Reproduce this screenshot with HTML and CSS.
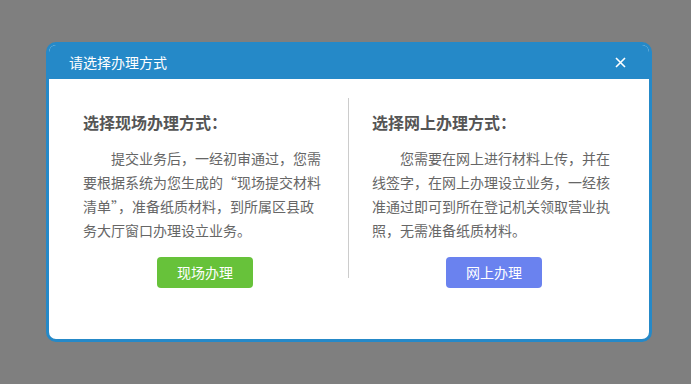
FILE: index.html
```html
<!DOCTYPE html>
<html lang="zh-CN">
<head>
    <meta charset="UTF-8">
    <title>请选择办理方式</title>
    <link rel="stylesheet" href="styles.css">
</head>
<body>
    <div class="dialog">
        <div class="dialog-header">
            <span class="dialog-title">请选择办理方式</span>
            <span class="dialog-close">
                <svg width="11" height="11" viewBox="0 0 11 11"><path d="M1 1L10 10M10 1L1 10" stroke="#fff" stroke-width="1.6" fill="none"/></svg>
            </span>
        </div>
        <div class="dialog-body">
            <div class="way way-left">
                <h2 class="way-title">选择现场办理方式：</h2>
                <p class="way-text">提交业务后，一经初审通过，您需要根据系统为您生成的“现场提交材料清单”，准备纸质材料，到所属区县政务大厅窗口办理设立业务。</p>
                <div class="way-action">
                    <a href="#" class="btn btn-green">现场办理</a>
                </div>
            </div>
            <div class="divider"></div>
            <div class="way way-right">
                <h2 class="way-title">选择网上办理方式：</h2>
                <p class="way-text">您需要在网上进行材料上传，并在线签字，在网上办理设立业务，一经核准通过即可到所在登记机关领取营业执照，无需准备纸质材料。</p>
                <div class="way-action">
                    <a href="#" class="btn btn-blue">网上办理</a>
                </div>
            </div>
        </div>
    </div>
</body>
</html>
```

FILE: styles.css
```css
:root {
    --main-blue: #2589c8;
    --page-bg: #7f7f7f;
    --title-color: #555555;
    --text-color: #666666;
    --line-color: #cccccc;
}

* {
    margin: 0;
    padding: 0;
    box-sizing: border-box;
}

body {
    font-family: "Noto Sans CJK SC", "Noto Sans", sans-serif;
    background-color: var(--page-bg);
    padding: 42px 0 0 46px;
    min-height: 100vh;
}

.dialog {
    width: 606px;
    height: 300px;
    background-color: #fff;
    border: 3px solid var(--main-blue);
    border-radius: 10px;
    overflow: hidden;
}

.dialog-header {
    height: 34px;
    background-color: var(--main-blue);
    display: flex;
    align-items: center;
    justify-content: space-between;
    padding: 0 23px 0 20px;
    color: #fff;
}

.dialog-title {
    font-size: 14px;
    line-height: 34px;
}

.dialog-close {
    display: flex;
    cursor: pointer;
}

.dialog-body {
    display: grid;
    grid-template-columns: 299px 1px 1fr;
    padding-top: 19px;
}

.divider {
    height: 180px;
    background-color: var(--line-color);
}

.way {
    padding-top: 12px;
}

.way-left {
    padding-left: 34px;
}

.way-right {
    padding-left: 23px;
}

.way-title {
    font-size: 16px;
    font-weight: 700;
    line-height: 24px;
    color: var(--title-color);
    margin-bottom: 12px;
}

.way-text {
    width: 244px;
    font-size: 14px;
    line-height: 24px;
    text-indent: 2em;
    color: var(--text-color);
}

.way-action {
    width: 244px;
    text-align: center;
    margin-top: 15px;
}

.btn {
    display: inline-block;
    width: 96px;
    height: 31px;
    line-height: 31px;
    border-radius: 4px;
    color: #fff;
    font-size: 14px;
    text-decoration: none;
}

.btn-green {
    background-color: #67c23a;
}

.btn-blue {
    background-color: #6a82ef;
}
```
